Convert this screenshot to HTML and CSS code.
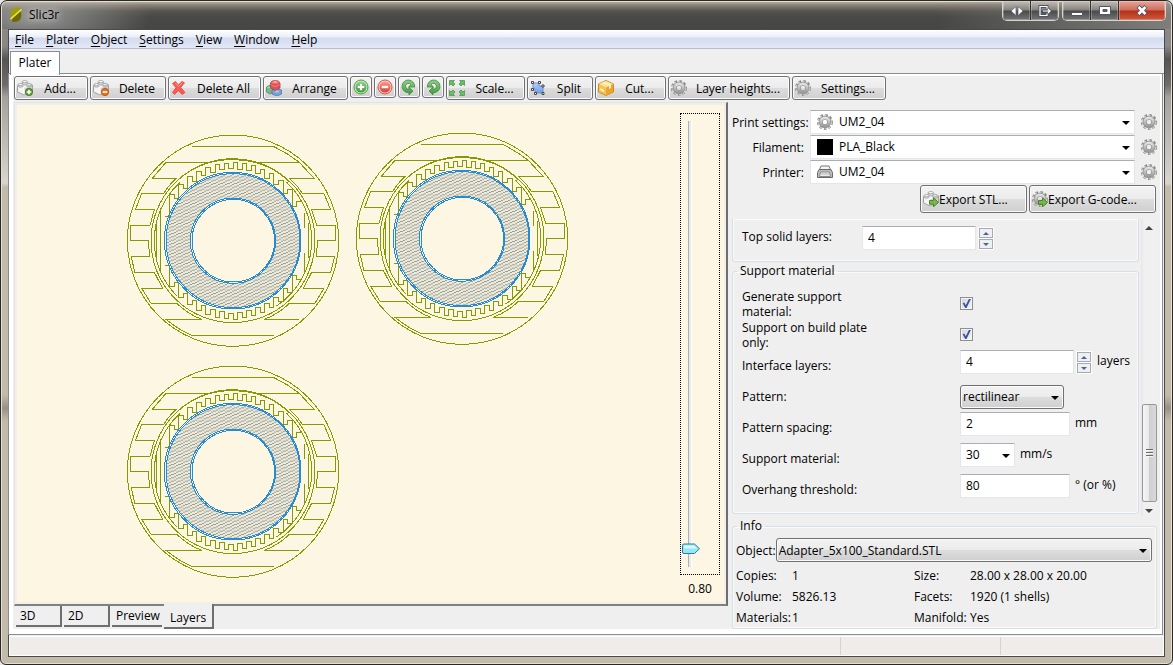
FILE: index.html
```html
<!DOCTYPE html>
<html lang="en">
<head>
<meta charset="utf-8">
<title>Slic3r</title>
<link rel="stylesheet" href="styles.css">
</head>
<body>
<svg class="defs" width="0" height="0" aria-hidden="true">
  <defs>
    <linearGradient id="gGray" x1="0" y1="0" x2="0" y2="1"><stop offset="0" stop-color="#e2e2e2"/><stop offset="1" stop-color="#9a9a9a"/></linearGradient>
    <linearGradient id="gGreen" x1="0" y1="0" x2="0" y2="1"><stop offset="0" stop-color="#8fd08a"/><stop offset="1" stop-color="#3f9a3c"/></linearGradient>
    <linearGradient id="gRed" x1="0" y1="0" x2="0" y2="1"><stop offset="0" stop-color="#ff9a8a"/><stop offset="1" stop-color="#dc3a34"/></linearGradient>
    <linearGradient id="gBlue" x1="0" y1="0" x2="0" y2="1"><stop offset="0" stop-color="#b9d0f6"/><stop offset="1" stop-color="#6f9ce6"/></linearGradient>
    <symbol id="gear" viewBox="0 0 16 16">
      <circle cx="8" cy="8" r="6.7" fill="none" stroke="#858585" stroke-width="2.6" stroke-dasharray="2.5 2.1 2.5 1.9"/>
      <circle cx="8" cy="8" r="6.8" fill="none" stroke="#d4d4d4" stroke-width="1.2" stroke-dasharray="2.3 2.3 2.3 1.9"/>
      <circle cx="8" cy="8" r="4.2" fill="none" stroke="#939393" stroke-width="4"/>
      <circle cx="8" cy="8" r="4.2" fill="none" stroke="url(#gGray)" stroke-width="2.8"/>
    </symbol>
    <symbol id="brick" viewBox="0 0 16 16">
      <path d="M.5 5.500 8 2.500l7.500 2.500v6L7 15 .5 12z" fill="#f3f3f3" stroke="#a2a2a2"/>
      <path d="M7 8.500 15 5.500V11L7 14.500z" fill="#cfcfcf"/>
      <path d="M1 6l6 2.500V14" fill="none" stroke="#fff"/>
      <g stroke="#a0a0a0" stroke-width=".8" fill="#d9d9d9">
        <path d="M5.300 1.700v2.500c1 1 4 1 5 0V1.700z"/><ellipse cx="7.800" cy="1.600" rx="2.500" ry="1.100" fill="#fcfcfc"/>
        <path d="M1.300 4.500v2c.8.9 3.700.9 4.500 0v-2z"/><ellipse cx="3.500" cy="4.500" rx="2.300" ry="1" fill="#fcfcfc"/>
        <path d="M9.800 4.300v2c.8.9 3.700.9 4.500 0v-2z"/><ellipse cx="12" cy="4.300" rx="2.300" ry="1" fill="#fcfcfc"/>
      </g>
    </symbol>
    <symbol id="brick-add" viewBox="0 0 16 16"><use href="#brick"/>
      <circle cx="12" cy="12" r="3.700" fill="#5d9a35" stroke="#3f6f1e" stroke-width=".7"/><path d="M12 9.700v4.600M9.700 12h4.600" stroke="#fff" stroke-width="1.600"/></symbol>
    <symbol id="brick-del" viewBox="0 0 16 16"><use href="#brick"/>
      <circle cx="12" cy="12" r="3.700" fill="#e8701c" stroke="#b34d0a" stroke-width=".7"/><path d="M9.700 12h4.600" stroke="#fff" stroke-width="1.700"/></symbol>
    <symbol id="go" viewBox="0 0 16 16"><path d="M6.500 9.500h4v-2.700l5 4.700-5 4.300v-2.600h-4z" fill="#76b84e" stroke="#3f7d22" stroke-width=".9"/></symbol>
    <symbol id="brick-go" viewBox="0 0 16 16"><use href="#brick"/><use href="#go"/></symbol>
    <symbol id="gear-go" viewBox="0 0 16 16"><use href="#gear"/><use href="#go"/></symbol>
    <symbol id="cross" viewBox="0 0 16 16"><path d="M1.500 3.500 4.500 1.500 7.300 5 11 1.500l2.500 1.300L9.700 7.500l4.300 5-3 2L7.300 10.500 3.500 14.500 1.500 12.500 5 7.800z" fill="#fb5a52" stroke="#e3433c" stroke-width=".8"/><path d="M4.300 3l3 3.500L11.300 3" fill="none" stroke="#ff9a92"/></symbol>
    <symbol id="bricks" viewBox="0 0 16 16">
      <path d="M.5 7l3.500-2 3 2v5.500L4 14 .5 12z" fill="#7fb58c" stroke="#4a8a5c" stroke-width=".8"/>
      <path d="M6 10l4.500-1.500 5 1.500v4L11 16l-5-2z" fill="#7ba3d6" stroke="#4a73ac" stroke-width=".8"/>
      <path d="M4.500 3v5l4.500 2.500L14 8V3z" fill="#dc5554" stroke="#b53a3a" stroke-width=".8"/>
      <path d="M4.500 4.500L9 6.500l5-2" fill="none" stroke="#f08a86" stroke-width=".8"/>
      <ellipse cx="9.200" cy="2.500" rx="4.300" ry="2" fill="#f07a76" stroke="#c04646" stroke-width=".8"/>
      <ellipse cx="9.200" cy="2" rx="2" ry=".9" fill="#f9a29e"/>
      <ellipse cx="11" cy="11.500" rx="2" ry="1" fill="#a9c8ee"/><ellipse cx="2.800" cy="7.500" rx="1.500" ry=".8" fill="#b1d8b8"/>
    </symbol>
    <symbol id="plus" viewBox="0 0 16 16"><circle cx="8" cy="8" r="7" fill="#c9e8c4" stroke="#4f9d49"/><circle cx="8" cy="8" r="5.500" fill="url(#gGreen)"/><path d="M8 4.700v6.600M4.700 8h6.600" stroke="#fff" stroke-width="2.200"/></symbol>
    <symbol id="minus" viewBox="0 0 16 16"><circle cx="8" cy="8" r="7" fill="#fbd0c8" stroke="#d3504a"/><circle cx="8" cy="8" r="5.500" fill="url(#gRed)"/><path d="M4.700 8h6.600" stroke="#fff" stroke-width="2.400"/></symbol>
    <symbol id="turn" viewBox="0 0 16 16"><path d="M13.300 5.300A6.300 6.300 0 1 0 8 13.600V16l4-4-4-3.700v2A3 3 0 1 1 10 5.600L7.500 8h6.300z" fill="url(#gGreen)" stroke="#3d8a3a" stroke-width=".8"/></symbol>
    <symbol id="turn-back" viewBox="0 0 16 16"><use href="#turn" transform="matrix(-1 0 0 1 16 0)"/></symbol>
    <symbol id="grow" viewBox="0 0 16 16"><g fill="#6cbb67" stroke="#3f9440" stroke-width=".7">
      <path id="arw" d="M.5.500h5L4 2l2 2-2 2-2-2L.500 5.500z"/><use href="#arw" transform="matrix(-1 0 0 1 16 0)"/><use href="#arw" transform="matrix(1 0 0 -1 0 16)"/><use href="#arw" transform="matrix(-1 0 0 -1 16 16)"/></g></symbol>
    <symbol id="shape" viewBox="0 0 16 16"><path d="M3 3h6v3h4v7H5V9H3z" fill="url(#gBlue)" stroke="#6c8fcd"/><g fill="#fff" stroke="#444"><path d="M1.500 1.500h2v2h-2zM8.500 1.500h2v2h-2zM1.500 8.500h2v2h-2zM12 5h2v2h-2zM4.500 12.500h2v2h-2zM12 12.500h2v2h-2z"/></g></symbol>
    <symbol id="box" viewBox="0 0 16 16"><path d="M8 .5 15.500 4v8L8 15.500.5 12V4z" fill="#f7c253" stroke="#cd8f22"/><path d="M8 7.500 15 4v8l-7 3.500z" fill="#e9a431"/><path d="M1 4l7-3 7 3-7 3.500z" fill="#fde49a"/><path d="M4 2.700l7 3.300v3l2-1V5L6 1.800zM2 8l4 2v2L2 10z" fill="#fff2c4"/></symbol>
    <symbol id="printer" viewBox="0 0 16 16"><path d="M4 2h8l2 5H2z" fill="#f4f4f4" stroke="#777"/><path d="M2 5.500h12l1.500 3v5h-15v-5z" fill="#bdbdbd" stroke="#686868"/><path d="M3.500 8h9l1 4.500h-11z" fill="#ededed" stroke="#8b8b8b"/><path d="M4 10h8" stroke="#b5b5b5"/></symbol>
    <pattern id="hatch" width="21" height="30" patternUnits="userSpaceOnUse">
      <rect width="21" height="30" fill="#eee8d5"/>
      <path d="M0 28.500h6M6 25.500h9M15 22.500h6M0 18.500h6M6 15.500h9M15 12.500h6M0 8.500h6M6 5.500h9M15 2.500h6" stroke="#93a1a1" stroke-width="3"/>
    </pattern>
    <!-- one printed ring; three units per screen pixel -->
    <symbol id="ring" viewBox="0 0 690 690">
      <g fill="none" stroke="#859900" stroke-width="3">
        <circle cx="339" cy="347" r="317"/>
        <circle cx="339" cy="347" r="246"/>
        <path d="M180 160A243 243 0 0 1 339 104A243 243 0 0 1 508 170M103 347A236 236 0 0 0 170 512M575 347A236 236 0 0 1 470 543M103 347A236 236 0 0 1 180 172M575 347A236 236 0 0 0 500 172"/>
        <path d="M462 65H216M462 65Q502 84 538 112H403M538 112L582 160H508Q532 180 548 206H612L632 254H575L590 301H647V346H592L590 394H644L632 442H575L550 490H612L585 535H508Q475 568 432 583H538"/>
        <path d="M275 112H138L97 160H168Q147 180 130 206H65L46 254H103L90 301H33L31 346H86L88 394H34L44 442H103L128 490H65L93 535H170Q205 568 245 583H138Q175 614 216 631H462"/>
        <path d="M109 295V398M122 250V443M565 295V400M553 383V443M553 310V265"/>
        <path id="teeth"/>
      </g>
      <circle cx="339" cy="347" r="164" fill="none" stroke="url(#hatch)" stroke-width="74"/>
      <g fill="none" stroke="#268bd2" stroke-width="3"><circle cx="338" cy="347" r="205"/><circle cx="339" cy="347" r="201"/><circle cx="339" cy="347" r="128"/><circle cx="340" cy="347" r="124"/></g>
    </symbol>
  </defs>
</svg>

<div class="window">
  <header class="titlebar">
    <svg class="app-icon" viewBox="0 0 16 16"><path d="M5 1q6-1.500 8 .5-1 6-9.500 10Q2 8 3 4z" fill="#a09a10"/><path d="M12.500 4Q14.500 8 12 13q-4 3-8 1.500Q3 12 12.500 4z" fill="#6d6a06"/><path d="M2.500 12 13.500 2.500" stroke="#f0ee3a" stroke-width="1.500"/></svg>
    <h1 class="title">Slic3r</h1>
    <div class="caption caption-extra">
      <button class="cap" aria-label="Move"><svg width="14" height="10" viewBox="0 0 14 10"><path d="M6 .5v9L1 5zM8 .5v9L13 5z" fill="#fff" stroke="#555b70" stroke-width=".7"/></svg></button>
      <button class="cap" aria-label="Send"><svg width="14" height="12" viewBox="0 0 14 12"><path d="M9 3.500v-2H2v9h7v-2M5 6h7M10 4l2 2-2 2" fill="none" stroke="#505668" stroke-width="3"/><path d="M9 3.500v-2H2v9h7v-2M5 6h7M10 4l2 2-2 2" fill="none" stroke="#fff" stroke-width="1.200"/></svg></button>
    </div>
    <div class="caption">
      <button class="cap" aria-label="Minimize"><svg width="14" height="12" viewBox="0 0 14 12"><path d="M1.500 7.500h11v3h-11z" fill="#fff" stroke="#505668"/></svg></button>
      <button class="cap" aria-label="Maximize"><svg width="14" height="12" viewBox="0 0 14 12"><path d="M1.500 1.500h11v8h-11zM5 4.500v2h4v-2z" fill="#fff" fill-rule="evenodd" stroke="#505668"/></svg></button>
      <button class="cap cap-close" aria-label="Close"><svg width="14" height="12" viewBox="0 0 14 12"><path d="M3 1.500l8 8M11 1.500l-8 8" stroke="#5a5064" stroke-width="4.500"/><path d="M3.500 2l7 7M10.500 2l-7 7" stroke="#fff" stroke-width="2.600"/></svg></button>
    </div>
  </header>

  <div class="client">
    <nav class="menubar">
      <button><u>F</u>ile</button><button><u>P</u>later</button><button><u>O</u>bject</button><button><u>S</u>ettings</button><button><u>V</u>iew</button><button><u>W</u>indow</button><button><u>H</u>elp</button>
    </nav>
    <div class="tabstrip"><button class="tab">Plater</button></div>
    <main class="page">
      <div class="toolbar">
        <button class="btn w-add"><svg class="ico"><use href="#brick-add"/></svg><span>Add...</span></button>
        <button class="btn w-del"><svg class="ico"><use href="#brick-del"/></svg><span>Delete</span></button>
        <button class="btn w-all"><svg class="ico"><use href="#cross"/></svg><span>Delete All</span></button>
        <button class="btn w-arr"><svg class="ico"><use href="#bricks"/></svg><span>Arrange</span></button>
        <button class="btn btn-icon" aria-label="More"><svg class="ico"><use href="#plus"/></svg></button>
        <button class="btn btn-icon" aria-label="Fewer"><svg class="ico"><use href="#minus"/></svg></button>
        <button class="btn btn-icon" aria-label="Rotate left"><svg class="ico"><use href="#turn"/></svg></button>
        <button class="btn btn-icon" aria-label="Rotate right"><svg class="ico"><use href="#turn-back"/></svg></button>
        <button class="btn w-scale"><svg class="ico"><use href="#grow"/></svg><span>Scale...</span></button>
        <button class="btn w-split"><svg class="ico"><use href="#shape"/></svg><span>Split</span></button>
        <button class="btn w-cut"><svg class="ico"><use href="#box"/></svg><span>Cut...</span></button>
        <button class="btn w-layer"><svg class="ico"><use href="#gear"/></svg><span>Layer heights...</span></button>
        <button class="btn w-set"><svg class="ico"><use href="#gear"/></svg><span>Settings...</span></button>
      </div>
      <div class="body">
        <section class="left">
          <div class="canvas">
            <svg class="plate" shape-rendering="crispEdges" role="img" aria-label="Layer toolpaths">
              <use href="#ring" x="105" y="22" width="230" height="230"/>
              <use href="#ring" x="334" y="20" width="230" height="230"/>
              <use href="#ring" x="105" y="253" width="230" height="230"/>
            </svg>
            <div class="layer-slider">
              <div class="focus"><input type="range" class="slider" aria-label="Layer height" min="0" max="1000" value="972"></div>
              <output>0.80</output>
            </div>
          </div>
          <div class="views">
            <button class="view">3D</button><button class="view">2D</button><button class="view view-wide">Preview</button><button class="view view-on">Layers</button>
          </div>
        </section>

        <aside class="side">
          <div class="presets">
            <label for="p1">Print settings:</label>
            <div class="combo"><svg class="ico"><use href="#gear"/></svg><select id="p1"><option>UM2_04</option></select></div>
            <button class="gearbtn" aria-label="Edit print settings"><svg class="ico"><use href="#gear"/></svg></button>
            <label for="p2">Filament:</label>
            <div class="combo"><span class="ico swatch"></span><select id="p2"><option>PLA_Black</option></select></div>
            <button class="gearbtn" aria-label="Edit filament"><svg class="ico"><use href="#gear"/></svg></button>
            <label for="p3">Printer:</label>
            <div class="combo"><svg class="ico"><use href="#printer"/></svg><select id="p3"><option>UM2_04</option></select></div>
            <button class="gearbtn" aria-label="Edit printer"><svg class="ico"><use href="#gear"/></svg></button>
          </div>
          <div class="exports">
            <button class="btn w-stl"><svg class="ico"><use href="#brick-go"/></svg>Export STL...</button>
            <button class="btn w-gc"><svg class="ico"><use href="#gear-go"/></svg>Export G-code...</button>
          </div>
          <div class="scroller">
            <div class="options">
              <div class="group group-top">
                <label for="o0">Top solid layers:</label>
                <div class="field"><input id="o0" class="text num" value="4"><span class="spin"><button aria-label="Up"></button><button aria-label="Down"></button></span></div>
              </div>
              <fieldset class="group group-main">
                <legend>Support material</legend>
                <div class="row"><label for="o1">Generate support material:</label><div class="field mid"><input type="checkbox" id="o1" checked></div></div>
                <div class="row"><label for="o2">Support on build plate only:</label><div class="field mid"><input type="checkbox" id="o2" checked></div></div>
                <div class="row"><label for="o3">Interface layers:</label><div class="field"><input id="o3" class="text num" value="4"><span class="spin"><button aria-label="Up"></button><button aria-label="Down"></button></span><span>layers</span></div></div>
                <div class="row"><label for="o4">Pattern:</label><div class="field mid"><div class="drop w-pat"><select id="o4"><option>rectilinear</option></select></div></div></div>
                <div class="row"><label for="o5">Pattern spacing:</label><div class="field"><input id="o5" class="text len" value="2"><span>mm</span></div></div>
                <div class="row"><label for="o6">Support material:</label><div class="field"><div class="combo combo-small"><select id="o6"><option>30</option></select></div><span>mm/s</span></div></div>
                <div class="row"><label for="o7">Overhang threshold:</label><div class="field"><input id="o7" class="text len" value="80"><span>° (or %)</span></div></div>
              </fieldset>
            </div>
            <div class="scrollbar" aria-hidden="true"><i class="up"></i><div class="thumb"><i></i></div><i class="down"></i></div>
          </div>
          <fieldset class="group info">
            <legend>Info</legend>
            <div class="object"><label for="obj">Object:</label><div class="drop"><select id="obj"><option>Adapter_5x100_Standard.STL</option></select></div></div>
            <dl class="facts">
              <dt>Copies:</dt><dd>1</dd><dt>Size:</dt><dd>28.00 x 28.00 x 20.00</dd>
              <dt>Volume:</dt><dd>5826.13</dd><dt>Facets:</dt><dd>1920 (1 shells)</dd>
              <dt>Materials:</dt><dd>1</dd><dt>Manifold:</dt><dd>Yes</dd>
            </dl>
          </fieldset>
        </aside>
      </div>
    </main>
    <footer class="status"><span></span><span></span><span></span></footer>
  </div>
</div>
<script src="script.js"></script>
</body>
</html>
```
FILE: script.js
```js
// Square-wave infill between two concentric circles, above and below the part.
const CX = 339, CY = 347, OUTER = 235, INNER = 217, PITCH = 13.6;

function wave(sign) {
  const n = 15;
  let d = "";
  for (let k = -n; k < n; k++) {
    const a = k * PITCH, b = (k + 1) * PITCH;
    const far = Math.max(Math.abs(a), Math.abs(b));
    const radius = (k & 1) === 0 ? OUTER : INNER;
    const y = Math.round(CY - sign * Math.sqrt(radius ** 2 - far ** 2));
    d += (d ? "L" : "M") + Math.round(CX + a) + " " + y + "H" + Math.round(CX + b);
    // close the step vertically before the next segment starts
  }
  return d;
}

document.getElementById("teeth").setAttribute("d", wave(1) + wave(-1));
```
FILE: styles.css
```css
* { box-sizing: border-box; }
html, body { height: 100%; margin: 0; }
body { font: 12px/15px "Open Sans", "Noto Sans", sans-serif; color: #000; background: #e8e8e8; }
button, input, select { font: inherit; color: inherit; margin: 0; padding: 0; border: 0; border-radius: 0; background: none; outline: 0; }
select { appearance: none; }
fieldset { margin: 0; padding: 0; border: 0; min-width: 0; }
u { text-underline-offset: 2px; }
.defs { position: absolute; }
.ico { width: 16px; height: 16px; flex: none; display: block; }

.window {
  height: 100vh; display: flex; flex-direction: column; padding: 0 7px 7px; border: 1px solid #2a2724; border-radius: 7px 7px 6px 6px;
  background:
    radial-gradient(120px 40px at 30px 16px, rgba(190,190,188,.65), transparent) top / 100% 28px no-repeat,
    linear-gradient(90deg, transparent 80%, rgba(150,150,148,.7)) top / 100% 28px no-repeat,
    linear-gradient(#c4b9a8, #8a8278 4px, #56554f 10px, #484846 16px, #464644 28px) top / 100% 28px no-repeat,
    linear-gradient(#8a8886 45px, #555453 58px, #6f6d6b 84px, #a5a19b 96px, #d8d5cf 182px, #c3bba9 186px, #c3bba9 394px, #989187 407px, #c3bba9 420px);
  box-shadow: inset 0 0 0 1px #e4dfd6;
}
.titlebar { height: 28px; flex: none; display: flex; align-items: flex-start; margin-right: -1px; }
.app-icon { width: 16px; height: 16px; margin: 6px 5px 0 0; }
.title { flex: 1; margin: 5px 0 0; font-size: 12px; line-height: 17px; font-weight: 400; text-shadow: 0 0 6px #ddd, 0 0 10px #ccc; }
.caption { display: flex; height: 20px; border: 1px solid #d8d4cc; border-top: 0; border-radius: 0 0 5px 5px; overflow: hidden; background: #333; gap: 1px; }
.caption-extra { margin-right: 3px; }
.cap { width: 27px; display: grid; place-items: center; background: linear-gradient(#c3bdb5, #85827e 9px, #4a4a4a 10px, #757575); box-shadow: inset 0 0 0 1px rgba(255,255,255,.25); }
.cap-close { width: 46px; background: linear-gradient(#e6a79a, #cf6d5c 9px, #b3301a 10px, #d05a3a); }

.client { flex: 1; min-height: 0; display: flex; flex-direction: column; border: 1px solid #4a4a4a; background: #efefef; }
.menubar { height: 19px; flex: none; display: flex; gap: 12px; padding: 0 6px; align-items: center; background: linear-gradient(#fff, #e9eef8 7px, #d4dbee 8px, #e2e8f6 18px); border-bottom: 1px solid #b5bcd0; }
.tabstrip { height: 25px; flex: none; padding: 2px 1px 0; border-bottom: 1px solid #898c95; }
.tab { display: block; width: 50px; height: 24px; padding-bottom: 2px; border: 1px solid #898c95; border-bottom: 0; background: #fff; position: relative; z-index: 1; }
.page { flex: 1; min-height: 0; display: flex; flex-direction: column; background: #efefef; border: solid #fff; border-width: 2px 2px 5px 4px; outline: 1px solid #898c95; margin: 0 2px 2px 0; }

.toolbar { display: flex; gap: 2px; padding: 0 1px; flex: none; height: 26px; }
.btn { display: flex; align-items: center; height: 24px; padding: 0 2px; border: 1px solid #707070; border-radius: 3px; background: linear-gradient(#f3f3f3, #ebebeb 50%, #dddddd 50%, #cfcfcf); box-shadow: inset 0 0 0 1px #fbfbfb; white-space: nowrap; }
.btn span { flex: 1; text-align: center; padding-left: 2px; }
.btn-icon { width: 22px; height: 22px; }
.w-add { width: 74px; } .w-del { width: 76px; } .w-all { width: 93px; } .w-arr { width: 85px; }
.w-scale { width: 79px; } .w-split { width: 66px; } .w-cut { width: 71px; } .w-layer { width: 122px; } .w-set { width: 94px; }

.body { flex: 1; min-height: 0; display: flex; }
.left { flex: 1; min-width: 0; display: flex; flex-direction: column; }
.canvas { flex: 1; min-height: 0; display: flex; background: #fdf6e3; border: 1px solid #e3e3e3; border-right: 2px solid #6e6e6e; border-bottom: 2px solid #808080; box-shadow: inset 0 0 0 2px #f1efea; margin-left: 1px; }
.plate { flex: 1; min-width: 0; height: 100%; }
.layer-slider { display: flex; flex-direction: column; align-items: center; padding: 10px 6px 8px 0; }
.focus { flex: 1; min-height: 0; width: 40px; border: 1px dotted #000; padding: 7px 1px; }
.layer-slider output { margin-top: 6px; }
.slider { appearance: none; writing-mode: vertical-lr; width: 18px; height: 100%; display: block; background: linear-gradient(90deg, #b0b0b0 1px, #e7eaea 1px, #e7eaea 3px, #fff 3px) 6px 0 / 4px 100% no-repeat; }
.slider::-webkit-slider-thumb { appearance: none; width: 18px; height: 12px; background: url("data:image/svg+xml,%3Csvg xmlns='http://www.w3.org/2000/svg' viewBox='0 0 18 12'%3E%3Cpath d='M2 1h10.500l5 4.700-5 4.800H2Q.5 10.500.5 9V2.500Q.5 1 2 1z' fill='%2397e6f7' stroke='%232a7f9c'/%3E%3Cpath d='M2 2.500h10l3 3H2z' fill='%23d9f8fe'/%3E%3C/svg%3E") no-repeat; }
.views { height: 23px; flex: none; display: flex; gap: 2px; padding-left: 3px; align-items: flex-start; }
.view { width: 46px; height: 21px; padding-left: 4px; text-align: left; border: solid #6e6e6e; border-width: 0 2px 2px 0; }
.view-wide { width: 50px; border-right: 0; white-space: nowrap; }
.view-on { width: 50px; height: 25px; margin-top: -2px; padding: 4px 0 0 6px; background: #efefef; position: relative; }

.side { flex: none; width: 432px; display: flex; flex-direction: column; padding: 8px 3px 0 4px; }
.presets { display: grid; grid-template-columns: 72px 1fr 16px; column-gap: 6px; row-gap: 1px; align-items: center; }
.presets label { text-align: right; white-space: nowrap; }
.combo { position: relative; height: 24px; }
.combo select { width: 100%; height: 24px; padding: 0 0 1px 28px; background: #fff; border: 1px solid #e3e6ea; border-top-color: #abadb3; }
.combo .ico { position: absolute; left: 7px; top: 4px; }
.combo-small { width: 55px; margin-right: 5px; }
.combo-small select { padding-left: 5px; }
.swatch { background: #000; }
.combo::after, .drop::after { content: ""; position: absolute; right: 5px; top: 11px; border: 4px solid transparent; border-top-color: #000; border-bottom: 0; pointer-events: none; }
.gearbtn { width: 16px; height: 16px; }
.exports { display: flex; justify-content: flex-end; gap: 2px; padding: 1px 1px 0 0; }
.exports .btn { height: 28px; }
.w-stl { width: 107px; } .w-gc { width: 127px; }

.scroller { flex: 1; min-height: 0; display: flex; gap: 2px; margin-top: 6px; overflow: hidden; }
.options { flex: 1; min-width: 0; }
.group { border: 1px solid #d5dfe5; border-radius: 3px; box-shadow: inset 0 0 0 1px #fafafa; margin: 0; }
.group legend { padding: 0 3px; line-height: 16px; }
.group-top { height: 43px; border-top: 0; border-radius: 0 0 3px 3px; display: flex; padding: 7px 9px; }
.group-top label { width: 120px; padding-top: 3px; }
.group-main { margin-top: 1px; padding: 9px 0 8px 9px; }
.group-main legend { margin-left: -5px; }
.row { display: grid; grid-template-columns: 130px 1fr; column-gap: 88px; height: 31px; }
.row label { align-self: center; }
.field { display: flex; align-items: flex-start; line-height: 22px; white-space: nowrap; }
.mid { align-items: center; }
.text { height: 24px; padding: 0 5px 2px; background: #fff; border: 1px solid #e3e6ea; border-top-color: #abadb3; }
.num { width: 114px; } .len { width: 110px; margin-right: 5px; }
.spin { display: flex; flex-direction: column; gap: 1px; margin: 1px 5px 0 2px; padding: 1px; background: #fff; }
.spin button { width: 14px; height: 10px; border: 1px solid #a5aab5; background: #f0f0f0; display: grid; place-items: center; }
.spin button::after { content: ""; border: 3px solid transparent; border-bottom-color: #4a62a8; border-top: 0; }
.spin button + button::after { transform: rotate(180deg); }
input[type=checkbox] { appearance: none; width: 13px; height: 13px; border: 1px solid #8e8f8f; background: linear-gradient(135deg, #cfd3dc, #f6f6f6); box-shadow: inset 0 0 0 1px #f4f4f4; display: grid; }
input[type=checkbox]:checked::after { content: ""; background: #3c52a0; clip-path: polygon(15% 48%, 30% 42%, 43% 66%, 72% 8%, 90% 8%, 50% 92%, 38% 92%); }
.drop { position: relative; flex: 1; }
.drop select { width: 100%; height: 24px; padding-left: 2px; border: 1px solid #707070; border-radius: 3px; background: linear-gradient(#f3f3f3, #ebebeb 50%, #dddddd 50%, #cfcfcf); box-shadow: inset 0 0 0 1px #fbfbfb; display: block; }
.w-pat { flex: none; width: 104px; }

.scrollbar { width: 16px; display: flex; flex-direction: column; align-items: center; background: linear-gradient(90deg, #e6e6e6, #f0f0f0 3px); padding: 7px 0 3px; }
.scrollbar > i { border: 4px solid transparent; }
.scrollbar .up { border-bottom-color: #444; border-top: 0; }
.scrollbar .down { border-top-color: #444; border-bottom: 0; margin-top: 7px; }
.thumb { width: 15px; height: 98px; margin-top: auto; border: 1px solid #979797; border-radius: 2px; background: linear-gradient(90deg, #f5f5f5, #e8e8ea 50%, #cfcfd2 50%, #dadadd); display: grid; place-items: center; }
.thumb i { width: 7px; height: 9px; background: repeating-linear-gradient(#6b6b6b 0 1px, #f5f5f5 1px 2px, transparent 2px 3px); }

.info { flex: none; margin-top: 2px; padding: 4px 4px 0 3px; }
.info legend { margin-left: 1px; }
.object { display: flex; align-items: center; }
.facts { margin: 3px 0 0; display: grid; grid-template-columns: 56px 122px 56px 1fr; line-height: 21px; }
.facts dd { margin: 0; white-space: nowrap; }

.status { height: 20px; flex: none; display: flex; background: #f0ecea; border: 1px solid #fff; }
.status span { width: 160px; border-right: 1px solid #d6d3d0; }
.status span:first-child { flex: 1; }
.status span:last-child { border: 0; width: 162px; }
```
